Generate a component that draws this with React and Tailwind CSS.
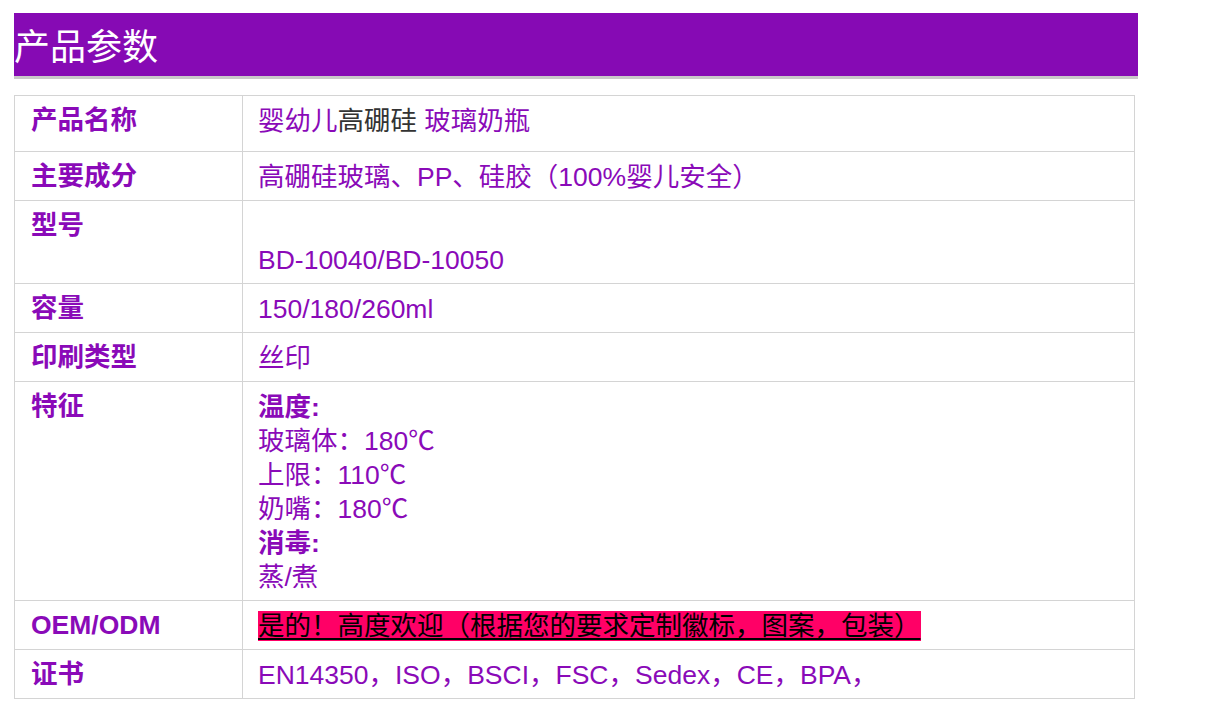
export default function App() {
  const P = "text-[#8a0ab8]";
  const rows = [
    ["产品名称", <span>婴幼儿<span className="text-[#333]">高硼硅</span> 玻璃奶瓶</span>, "h-[56px]"],
    ["主要成分", "高硼硅玻璃、PP、硅胶（100%婴儿安全）"],
    ["型号", <span><br />BD-10040/BD-10050</span>],
    ["容量", "150/180/260ml"],
    ["印刷类型", "丝印"],
    ["特征", <span><b>温度:</b><br />玻璃体：180℃<br />上限：110℃<br />奶嘴：180℃<br /><b>消毒:</b><br />蒸/煮</span>],
    ["OEM/ODM", <span className="bg-[#ff0066] text-black underline decoration-2 underline-offset-[3px]">是的！高度欢迎（根据您的要求定制徽标，图案，包装）</span>],
    ["证书", "EN14350，ISO，BSCI，FSC，Sedex，CE，BPA，"],
  ];
  return (
    <div className="bg-white w-[1207px] h-[722px] pt-[13px] pl-[14px]" style={{ fontFamily: '"Liberation Sans", "Noto Sans CJK SC", sans-serif' }}>
      <div className="w-[1124px] h-[66px] bg-[#860ab4] border-b-[3px] border-[#c9c9c9] text-white text-[36px] leading-[70px]">产品参数</div>
      <table className={`mt-[16px] w-[1121px] border-collapse text-[26.5px] leading-[34px] ${P}`}>
        <tbody>
          {rows.map(([k, v, h], i) => (
            <tr key={i} className={h || ""}>
              <td className="w-[228px] border border-[#d4d4d4] align-top px-[16px] pt-[7px] pb-[7px] font-bold">{k}</td>
              <td className="border border-[#d4d4d4] align-top px-[15px] pt-[8px] pb-[6px] font-normal">{v}</td>
            </tr>
          ))}
        </tbody>
      </table>
    </div>
  );
}
